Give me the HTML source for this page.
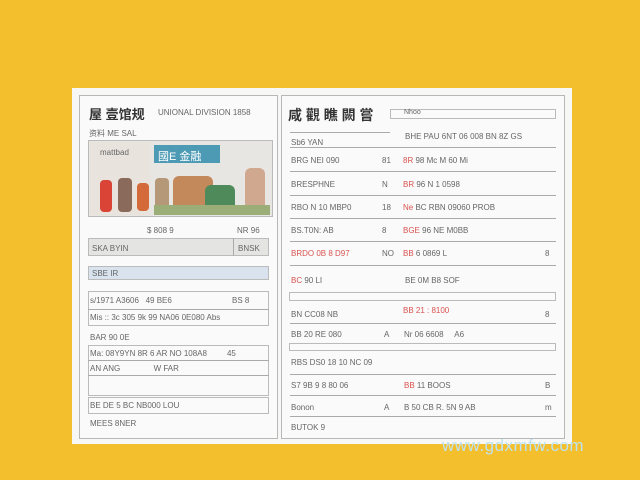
<!DOCTYPE html>
<html><head><meta charset="utf-8"><style>
*{margin:0;padding:0;box-sizing:border-box}
body{width:640px;height:480px;background:#f4bf2c;position:relative;overflow:hidden;font-family:"Liberation Sans","Noto Sans CJK SC",sans-serif;color:#555}
.p{position:absolute}
.paper{left:72px;top:88px;width:500px;height:356px;background:#f7f7f5}
.panel{border:1px solid #b8b8b8;background:#fafafa}
.t{position:absolute;font-size:8px;white-space:nowrap;color:#666}
.h{font-size:14px;font-weight:bold;color:#333}
.r{color:#d9534f}
.line{position:absolute;height:1px;background:#aaa}
.box{position:absolute;border:1px solid #bbb}
</style></head><body>
<div class="p paper"></div>
<div class="p panel" style="left:79px;top:95px;width:199px;height:344px"></div>
<div class="p panel" style="left:281px;top:95px;width:284px;height:344px"></div>

<div class="t h" style="left:89px;top:104px;font-size:13px">屋 壹馆规</div>
<div class="t" style="left:158px;top:108px">UNIONAL DIVISION 1858</div>
<div class="t" style="left:89px;top:128px">资料 ME SAL</div>
<div class="box" style="left:88px;top:140px;width:185px;height:77px;background:#e8e6e2"></div>
<div class="p" style="left:90px;top:142px;width:60px;height:73px;background:#e9e3de"></div>
<div class="p" style="left:154px;top:145px;width:66px;height:18px;background:#4c9ab4"></div>
<div class="t" style="left:158px;top:148px;color:#fff;font-size:11px">國E 金融</div>
<div class="t" style="left:100px;top:148px">mattbad</div>
<div class="p" style="left:100px;top:180px;width:12px;height:32px;background:#d94436;border-radius:4px"></div>
<div class="p" style="left:118px;top:178px;width:14px;height:34px;background:#8a6a5a;border-radius:4px"></div>
<div class="p" style="left:137px;top:183px;width:12px;height:28px;background:#d46a3a;border-radius:4px"></div>
<div class="p" style="left:155px;top:178px;width:14px;height:34px;background:#b49878;border-radius:4px"></div>
<div class="p" style="left:173px;top:176px;width:40px;height:36px;background:#c4895a;border-radius:6px"></div>
<div class="p" style="left:205px;top:185px;width:30px;height:26px;background:#4f8a5a;border-radius:6px"></div>
<div class="p" style="left:245px;top:168px;width:20px;height:42px;background:#d0a890;border-radius:6px"></div>
<div class="p" style="left:154px;top:205px;width:116px;height:10px;background:#9cae78"></div>
<div class="t" style="left:147px;top:226px">$ 808 9</div>
<div class="t" style="left:237px;top:226px">NR 96</div>
<div class="box" style="left:88px;top:238px;width:181px;height:18px;background:#e4e4e2"></div>
<div class="line" style="left:233px;top:238px;width:1px;height:18px"></div>
<div class="t" style="left:92px;top:244px">SKA BYIN</div>
<div class="t" style="left:238px;top:244px">BNSK</div>
<div class="box" style="left:88px;top:266px;width:181px;height:14px;background:#d8e3ee"></div>
<div class="t" style="left:92px;top:269px">SBE IR</div>
<div class="box" style="left:88px;top:291px;width:181px;height:35px"></div>
<div class="line" style="left:88px;top:309px;width:181px"></div>
<div class="t" style="left:90px;top:296px">s/1971 A3606 &nbsp; 49 BE6</div>
<div class="t" style="left:232px;top:296px">BS 8</div>
<div class="t" style="left:90px;top:313px">Mis :: 3c 305 9k 99 NA06 0E080 Abs</div>
<div class="t" style="left:90px;top:333px">BAR 90 0E</div>
<div class="box" style="left:88px;top:345px;width:181px;height:51px"></div>
<div class="line" style="left:88px;top:360px;width:181px"></div>
<div class="line" style="left:88px;top:375px;width:181px"></div>
<div class="t" style="left:90px;top:349px">Ma: 08Y9YN 8R 6 AR NO 108A8 &nbsp; &nbsp; &nbsp; &nbsp; 45</div>
<div class="t" style="left:90px;top:364px">AN ANG &nbsp; &nbsp; &nbsp; &nbsp; &nbsp; &nbsp; &nbsp; W FAR</div>
<div class="box" style="left:88px;top:397px;width:181px;height:17px"></div>
<div class="t" style="left:90px;top:401px">BE DE 5 BC NB000 LOU</div>
<div class="t" style="left:90px;top:419px">MEES 8NER</div>

<div class="t h" style="left:288px;top:105px">咸 觀 瞧 闕 嘗</div>
<div class="box" style="left:390px;top:109px;width:166px;height:10px"></div>
<div class="t" style="left:404px;top:109px;font-size:7px">Nhoo</div>
<div class="line" style="left:290px;top:132px;width:100px"></div>
<div class="t" style="left:291px;top:138px">Sb6 YAN</div>
<div class="t" style="left:405px;top:132px">BHE PAU 6NT 06 008 BN 8Z GS</div>
<div class="line" style="left:290px;top:147px;width:266px"></div>
<div class="t" style="left:291px;top:156px">BRG NEI 090</div><div class="t" style="left:382px;top:156px">81</div><div class="t" style="left:403px;top:156px"><span class="r">8R</span> 98 Mc M 60 Mi</div>
<div class="line" style="left:290px;top:171px;width:266px"></div>
<div class="t" style="left:291px;top:180px">BRESPHNE</div><div class="t" style="left:382px;top:180px">N</div><div class="t" style="left:403px;top:180px"><span class="r">BR</span> 96 N 1 0598</div>
<div class="line" style="left:290px;top:195px;width:266px"></div>
<div class="t" style="left:291px;top:203px">RBO N 10 MBP0</div><div class="t" style="left:382px;top:203px">18</div><div class="t" style="left:403px;top:203px"><span class="r">Ne</span> BC RBN 09060 PROB</div>
<div class="line" style="left:290px;top:218px;width:266px"></div>
<div class="t" style="left:291px;top:226px">BS.T0N: AB</div><div class="t" style="left:382px;top:226px">8</div><div class="t" style="left:403px;top:226px"><span class="r">BGE</span> 96 NE M0BB</div>
<div class="line" style="left:290px;top:241px;width:266px"></div>
<div class="t r" style="left:291px;top:249px">BRDO 0B 8 D97</div><div class="t" style="left:382px;top:249px">NO</div><div class="t" style="left:403px;top:249px"><span class="r">BB</span> 6 0869 L</div><div class="t" style="left:545px;top:249px">8</div>
<div class="line" style="left:290px;top:265px;width:266px"></div>
<div class="t" style="left:291px;top:276px"><span class="r">BC</span> 90 LI</div><div class="t" style="left:405px;top:276px">BE 0M B8 SOF</div>
<div class="box" style="left:289px;top:292px;width:267px;height:9px"></div>
<div class="t" style="left:291px;top:310px">BN CC08 NB</div><div class="t r" style="left:403px;top:306px">BB 21 : 8100</div><div class="t" style="left:545px;top:310px">8</div>
<div class="line" style="left:290px;top:323px;width:266px"></div>
<div class="t" style="left:291px;top:330px">BB 20 RE 080</div><div class="t" style="left:384px;top:330px">A</div><div class="t" style="left:404px;top:330px">Nr 06 6608 &nbsp; &nbsp; A6</div>
<div class="box" style="left:289px;top:343px;width:267px;height:8px"></div>
<div class="t" style="left:291px;top:358px">RBS DS0 18 10 NC 09</div>
<div class="line" style="left:290px;top:374px;width:266px"></div>
<div class="t" style="left:291px;top:381px">S7 9B 9 8 80 06</div><div class="t" style="left:404px;top:381px"><span class="r">BB</span> 11 BOOS</div><div class="t" style="left:545px;top:381px">B</div>
<div class="line" style="left:290px;top:395px;width:266px"></div>
<div class="t" style="left:291px;top:403px">Bonon</div><div class="t" style="left:384px;top:403px">A</div><div class="t" style="left:404px;top:403px">B 50 CB R. 5N 9 AB</div><div class="t" style="left:545px;top:403px">m</div>
<div class="line" style="left:290px;top:416px;width:266px"></div>
<div class="t" style="left:291px;top:423px">BUTOK 9</div>
<div class="t" style="left:442px;top:436px;font-size:17px;color:#bfe3f0;letter-spacing:0.5px">www.gdxmfw.com</div>
</body></html>
